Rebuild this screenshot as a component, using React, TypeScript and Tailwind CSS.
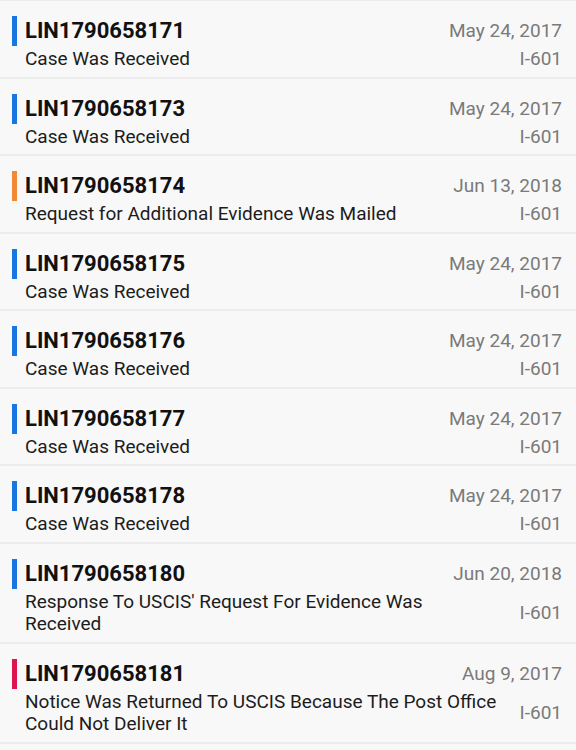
import React from 'react';

type Case = {
    receipt: string;
    status: string;
    date: string;
    form: string;
    color: 'blue' | 'orange' | 'red';
};

const cases: Case[] = [
    { receipt: 'LIN1790658171', status: 'Case Was Received', date: 'May 24, 2017', form: 'I-601', color: 'blue' },
    { receipt: 'LIN1790658173', status: 'Case Was Received', date: 'May 24, 2017', form: 'I-601', color: 'blue' },
    { receipt: 'LIN1790658174', status: 'Request for Additional Evidence Was Mailed', date: 'Jun 13, 2018', form: 'I-601', color: 'orange' },
    { receipt: 'LIN1790658175', status: 'Case Was Received', date: 'May 24, 2017', form: 'I-601', color: 'blue' },
    { receipt: 'LIN1790658176', status: 'Case Was Received', date: 'May 24, 2017', form: 'I-601', color: 'blue' },
    { receipt: 'LIN1790658177', status: 'Case Was Received', date: 'May 24, 2017', form: 'I-601', color: 'blue' },
    { receipt: 'LIN1790658178', status: 'Case Was Received', date: 'May 24, 2017', form: 'I-601', color: 'blue' },
    { receipt: 'LIN1790658180', status: "Response To USCIS' Request For Evidence Was Received", date: 'Jun 20, 2018', form: 'I-601', color: 'blue' },
    { receipt: 'LIN1790658181', status: 'Notice Was Returned To USCIS Because The Post Office Could Not Deliver It', date: 'Aug 9, 2017', form: 'I-601', color: 'red' },
];

const barColors = {
    blue: 'bg-[#1976e0]',
    orange: 'bg-[#f08a34]',
    red: 'bg-[#dc1450]',
};

const CaseRow: React.FC<{ item: Case }> = ({ item }) => (
    <div className="border-b-2 border-[#ececec] pt-[15px] pb-[6px] pl-[12px] pr-[14px]">
        {/* receipt number + last update */}
        <div className="flex items-center justify-between h-[30px]">
            <div className="flex items-center">
                <span className={`w-[5px] h-[30px] mr-[8px] ${barColors[item.color]}`} />
                <span className="text-[22px] leading-[30px] font-bold text-[#111111]">{item.receipt}</span>
            </div>
            <span className="text-[19px] leading-[30px] text-[#7a7a7a]">{item.date}</span>
        </div>
        {/* status + form type */}
        <div className="flex items-center justify-between gap-[20px] mt-[2px]">
            <p className="flex-1 pl-[13px] text-[19px] leading-[22.5px] text-[#1c1c1c]">{item.status}</p>
            <span className="shrink-0 text-[19px] leading-[22.5px] text-[#7a7a7a]">{item.form}</span>
        </div>
    </div>
);

export default function App() {
    return (
        <div className="min-h-screen w-[576px] bg-[#f8f8f8] border-t border-[#ececec] font-['Roboto',sans-serif]">
            {cases.map((c) => (
                <CaseRow key={c.receipt} item={c} />
            ))}
        </div>
    );
}
